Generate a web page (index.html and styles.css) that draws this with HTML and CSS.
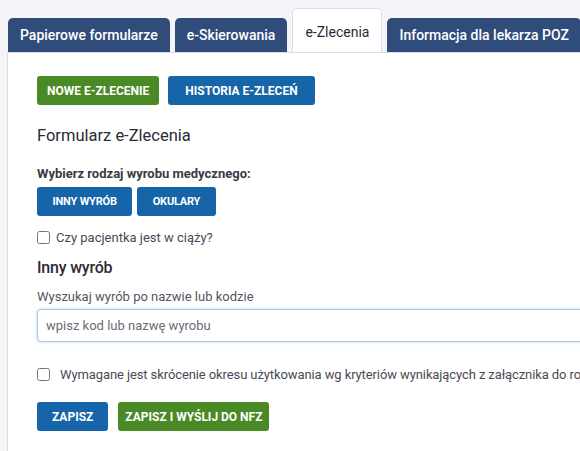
FILE: index.html
```html
<!DOCTYPE html>
<html lang="pl">

<head>
  <meta charset="UTF-8">
  <meta name="viewport" content="width=device-width, initial-scale=1.0">
  <title>e-Zlecenia</title>
  <link rel="stylesheet" href="styles.css">
</head>

<body>
  <div id="tabs">
    <div class="tab">Papierowe formularze</div>
    <div class="tab">e-Skierowania</div>
    <div class="tab active">e-Zlecenia</div>
    <div class="tab">Informacja dla lekarza POZ</div>
  </div>

  <div id="panel">
    <div class="row top-buttons">
      <button class="button green pad-s">NOWE E-ZLECENIE</button>
      <button class="button blue pad-l">HISTORIA E-ZLECEŃ</button>
    </div>

    <h2>Formularz e-Zlecenia</h2>

    <div class="label-bold">Wybierz rodzaj wyrobu medycznego:</div>
    <div class="row kind-buttons">
      <button class="button blue small">INNY WYRÓB</button>
      <button class="button blue small">OKULARY</button>
    </div>

    <label class="check">
      <input type="checkbox">
      <span>Czy pacjentka jest w ciąży?</span>
    </label>

    <h3>Inny wyrób</h3>

    <label for="search" class="label">Wyszukaj wyrób po nazwie lub kodzie</label>
    <input id="search" type="text" placeholder="wpisz kod lub nazwę wyrobu">

    <label class="check wide">
      <input type="checkbox">
      <span>Wymagane jest skrócenie okresu użytkowania wg kryteriów wynikających z załącznika do rozporządzenia</span>
    </label>

    <div class="row bottom-buttons">
      <button class="button blue pad-m">ZAPISZ</button>
      <button class="button green pad-xs">ZAPISZ I WYŚLIJ DO NFZ</button>
    </div>
  </div>
</body>

</html>
```

FILE: styles.css
```css
* {
  margin: 0;
  padding: 0;
  box-sizing: border-box;
  font-family: Roboto, "Noto Sans", sans-serif;
}

html, body {
  background-color: #f4f5f9;
  overflow: hidden;
}

body {
  width: 580px;
  height: 451px;
}

#tabs {
  display: flex;
  align-items: flex-end;
  gap: 5px;
  padding: 8px 0 0 8px;
  height: 52px;
  white-space: nowrap;
}

.tab {
  background-color: #2f4c7a;
  color: #fff;
  font-size: 14px;
  font-weight: 500;
  height: 34px;
  line-height: 35px;
  padding: 0 12px;
  border-radius: 5px 5px 0 0;
}

.tab.active {
  background-color: #fff;
  color: #2b2b33;
  height: 44px;
  line-height: 46px;
  border: 1px solid #dcdee6;
  border-bottom: none;
  font-weight: 400;
}

#panel {
  background-color: #fff;
  margin-left: 7px;
  border-left: 1px solid #dcdee6;
  border-top: 1px solid #dcdee6;
  padding: 23px 0 0 29px;
  height: 399px;
  color: #2b2b33;
  overflow: hidden;
}

.row {
  display: flex;
  gap: 9px;
}

.button {
  border: none;
  border-radius: 3px;
  color: #fff;
  font-size: 12px;
  font-weight: 700;
  height: 29px;
  padding: 0 10px;
  cursor: pointer;
}

.button.pad-xs {
  padding: 0 7px;
}

.button.pad-s {
  padding: 0 10px;
}

.button.pad-m {
  padding: 0 15px;
}

.button.pad-l {
  padding: 0 17px;
}

.button.small {
  font-size: 11px;
  padding: 0 15.5px;
  letter-spacing: -0.2px;
}

.green {
  background-color: #4a8a26;
}

.blue {
  background-color: #1565a8;
}

h2 {
  font-size: 16.5px;
  font-weight: 400;
  margin-top: 21px;
}

.label-bold {
  font-size: 13px;
  font-weight: 700;
  color: #3a3a44;
  margin-top: 21px;
}

.kind-buttons {
  margin-top: 6px;
  gap: 5px;
}

.check {
  display: flex;
  align-items: center;
  gap: 6px;
  font-size: 13px;
  color: #4a4a55;
  margin-top: 14px;
  white-space: nowrap;
}

.check input {
  width: 13px;
  height: 13px;
  margin: 0;
}

h3 {
  font-size: 16px;
  font-weight: 500;
  letter-spacing: -0.2px;
  margin-top: 13px;
}

.label {
  display: block;
  font-size: 13px;
  color: #55555f;
  margin-top: 12px;
}

#search {
  display: block;
  width: 560px;
  height: 33px;
  margin-top: 5px;
  border: 1px solid #a9c8e6;
  border-radius: 4px;
  box-shadow: 0 0 3px rgba(120, 170, 220, 0.5);
  padding: 0 8px;
  font-size: 13px;
  outline: none;
}

#search::placeholder {
  color: #6a6a75;
}

.check.wide {
  margin-top: 25px;
  gap: 10px;
  letter-spacing: -0.1px;
}

.bottom-buttons {
  margin-top: 20px;
  gap: 10px;
}
```
